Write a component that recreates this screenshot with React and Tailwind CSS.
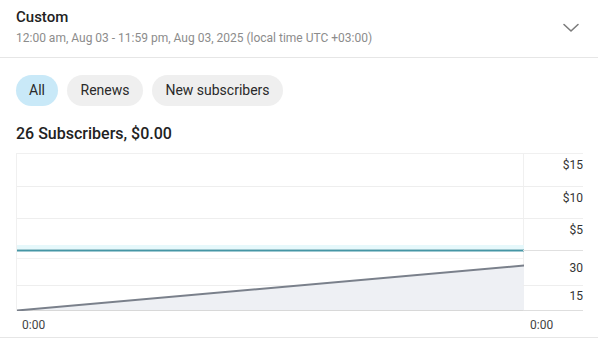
import React from "react";

export default function App() {
  return (
    <div className="w-[598px] h-[340px] bg-white overflow-hidden" style={{ fontFamily: "Roboto, 'Liberation Sans', sans-serif" }}>
      <div className="flex items-start justify-between pl-4 pr-[18px] pt-[7px] h-[58px] border-b border-[#e6e6e6]">
        <div>
          <div className="text-[15px] leading-[20px] font-medium text-[#222]">Custom</div>
          <div className="text-[12px] leading-[16px] mt-[3px] text-[#8c8c8c]">12:00 am, Aug 03 - 11:59 pm, Aug 03, 2025 (local time UTC +03:00)</div>
        </div>
        <svg width="18" height="18" viewBox="0 0 18 18" className="mt-[12px]" fill="none">
          <path d="M2 5.5 L9 12 L16 5.5" stroke="#7c7c7c" strokeWidth="1.6" strokeLinecap="round" strokeLinejoin="round" />
        </svg>
      </div>
      <div className="flex gap-[9px] px-4 pt-[17px]">
        <div className="h-[31px] w-[42px] justify-center rounded-full bg-[#c9e9f8] flex items-center text-[14px] text-[#2a2a2a]">All</div>
        <div className="h-[31px] w-[76px] justify-center rounded-full bg-[#efefef] flex items-center text-[14px] text-[#2a2a2a]">Renews</div>
        <div className="h-[31px] w-[131px] justify-center rounded-full bg-[#efefef] flex items-center text-[14px] text-[#2a2a2a]">New subscribers</div>
      </div>
      <div className="px-4 mt-[18px] text-[16px] leading-[20px] font-medium text-[#222]">26 Subscribers, $0.00</div>
      <div className="mt-[9px] ml-4 w-[567px]">
        <div className="flex">
          <div className="w-[507px] h-[158px] border-l border-[#f0f0f0]">
            <svg width="507" height="158" viewBox="0 0 507 158" className="block">
              <line x1="0" y1="0.5" x2="507" y2="0.5" stroke="#f0f0f0" />
              <line x1="0" y1="33.5" x2="507" y2="33.5" stroke="#eeeeee" />
              <line x1="0" y1="65.5" x2="507" y2="65.5" stroke="#eeeeee" />
              <line x1="0" y1="105.5" x2="507" y2="105.5" stroke="#f2f2f2" />
              <line x1="0" y1="132.5" x2="507" y2="132.5" stroke="#eeeeee" />
              <line x1="506.5" y1="0" x2="506.5" y2="158" stroke="#f0f0f0" />
              <rect x="0" y="92" width="507" height="4" fill="#e6f8fb" />
              <line x1="0" y1="97.5" x2="507" y2="97.5" stroke="#4596a5" strokeWidth="2" />
              <polygon points="0,158 507,113 507,158" fill="#eef0f4" />
              <line x1="0" y1="157.5" x2="507" y2="157.5" stroke="#d8d8d8" />
              <line x1="0" y1="157.5" x2="507" y2="112.5" stroke="#7a808b" strokeWidth="2" />
            </svg>
          </div>
          <div className="w-[60px] text-right text-[12px] leading-[16px] text-[#333]">
            <div className="h-[33px] border-t border-[#f0f0f0] pt-[3px]">$15</div>
            <div className="h-[32px] border-t border-[#eeeeee] pt-[3px]">$10</div>
            <div className="h-[32px] border-t border-[#eeeeee] pt-[3px]">$5</div>
            <div className="h-[35px] border-t border-[#e0e0e0] pt-[9px]">30</div>
            <div className="h-[26px] border-t border-[#eeeeee] pt-[2px] border-b border-b-[#dedede]">15</div>
          </div>
        </div>
        <div className="flex h-[26px] text-[12px] leading-[16px] text-[#444]">
          <div className="w-[507px] pl-[6px] pt-[6px]">0:00</div>
          <div className="w-[60px] pl-[7px] pt-[6px]">0:00</div>
        </div>
      </div>
      <div className="border-t border-[#e6e6e6]"></div>
    </div>
  );
}
